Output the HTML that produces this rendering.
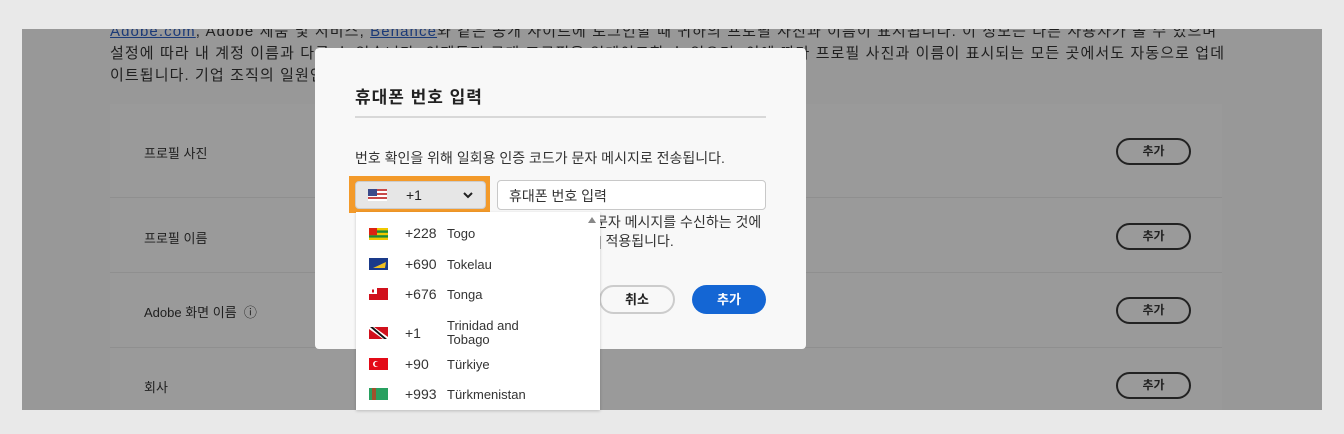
<!DOCTYPE html>
<html><head><meta charset="utf-8"><style>
*{box-sizing:border-box;margin:0;padding:0}
body{width:1344px;height:434px;background:#e9e9e9;font-family:"Liberation Sans","Noto Sans CJK KR",sans-serif;position:relative;overflow:hidden;color:#222}
.page{position:absolute;left:22px;top:29px;width:1300px;height:381px;background:#989898;overflow:hidden;z-index:1}
.txt{position:absolute;left:88px;font-size:15px;letter-spacing:1.1px;color:#1f1f1f;white-space:nowrap;line-height:22px}
.card{position:absolute;left:88px;top:75px;width:1112px;height:320px;background:#9a9a9a}
.row{position:absolute;left:0;width:1112px;border-bottom:1px solid #8f8f8f}
.row span{position:absolute;left:34px;font-size:13px;color:#1f1f1f}
.btn{position:absolute;left:1006px;width:75px;height:27px;border:2px solid #222;border-radius:14px;font-size:12px;font-weight:bold;text-align:center;line-height:23px;color:#222}
.modal{position:absolute;left:315px;top:48px;width:491px;height:301px;background:#f8f8f8;border-radius:4px;z-index:5}
.dd{position:absolute;left:356px;top:212px;width:244px;height:198px;background:#fff;box-shadow:0 1px 3px rgba(0,0,0,.2);overflow:hidden;z-index:6}
.it{position:absolute;left:0;width:244px;font-size:14px;color:#333}
.flag{position:absolute;left:13px;width:19px;height:12px}
.code{position:absolute;left:49px}
.name{position:absolute;left:91px;font-size:13px;line-height:14px}
</style></head><body>
<div class="page">
<div class="txt" style="top:-8px"><u style="color:#1b3a78">Adobe.com</u>, Adobe 제품 및 서비스, <u style="color:#1b3a78">Behance</u>와 같은 공개 사이트에 로그인할 때 귀하의 프로필 사진과 이름이 표시됩니다. 이 정보는 다른 사용자가 볼 수 있으며</div>
<div class="txt" style="top:14px">설정에 따라 내 계정 이름과 다를 수 있습니다. 언제든지 공개 프로필을 업데이트할 수 있으며, 이에 따라 프로필 사진과 이름이 표시되는 모든 곳에서도 자동으로 업데</div>
<div class="txt" style="top:36px">이트됩니다. 기업 조직의 일원인 경우 조직 내에서 이 프로필 사진과 이름이 사용될 수 있습니다.</div>
<div class="card">
<div class="row" style="top:0;height:94px"><span style="top:39px">프로필 사진</span><div class="btn" style="top:34px">추가</div></div>
<div class="row" style="top:94px;height:75px"><span style="top:30px">프로필 이름</span><div class="btn" style="top:25px">추가</div></div>
<div class="row" style="top:169px;height:75px"><span style="top:29px">Adobe 화면 이름 &nbsp;ⓘ</span><div class="btn" style="top:24px">추가</div></div>
<div class="row" style="top:244px;height:76px;border:0"><span style="top:29px">회사</span><div class="btn" style="top:24px">추가</div></div>
</div>
</div>
<div class="modal">
<div style="position:absolute;left:40px;top:35px;font-size:17px;letter-spacing:1px;font-weight:bold;color:#222">휴대폰 번호 입력</div>
<div style="position:absolute;left:40px;top:68px;width:411px;height:2px;background:#d8d8d8"></div>
<div style="position:absolute;left:40px;top:100px;font-size:14px;color:#333">번호 확인을 위해 일회용 인증 코드가 문자 메시지로 전송됩니다.</div>
<div style="position:absolute;left:34px;top:128px;width:141px;height:37px;background:#f39a2a"></div>
<div style="position:absolute;left:40px;top:133px;width:131px;height:28px;background:#e6e6e6;border:1px solid #ccc;border-radius:4px">
<svg style="position:absolute;left:12px;top:7px" width="19" height="12"><rect width="19" height="12" fill="#c84a4a"/><rect y="2" width="19" height="2" fill="#fff"/><rect y="6" width="19" height="2" fill="#fff"/><rect y="10" width="19" height="2" fill="#fff"/><rect width="9" height="7" fill="#3b4a8a"/></svg>
<span style="position:absolute;left:50px;top:5px;font-size:14px">+1</span>
<svg style="position:absolute;left:107px;top:10px" width="10" height="7"><path d="M1 1L5 5L9 1" stroke="#222" stroke-width="2" fill="none"/></svg>
</div>
<div style="position:absolute;left:182px;top:132px;width:269px;height:30px;background:#fff;border:1px solid #c8c8c8;border-radius:4px;font-size:14px;padding:5px 11px;color:#333">휴대폰 번호 입력</div>
<div style="position:absolute;left:280px;top:164px;font-size:14px;color:#333">문자 메시지를 수신하는 것에</div>
<div style="position:absolute;left:283px;top:183px;font-size:14px;color:#333">| 적용됩니다.</div>
<div style="position:absolute;left:284px;top:237px;width:76px;height:29px;border:2px solid #ccc;border-radius:15px;font-size:13px;font-weight:bold;text-align:center;line-height:25px">취소</div>
<div style="position:absolute;left:377px;top:237px;width:74px;height:29px;background:#1466d4;border-radius:15px;font-size:13px;font-weight:bold;text-align:center;line-height:29px;color:#fff">추가</div>
</div>
<div class="dd">
<div style="position:absolute;left:232px;top:5px;width:0;height:0;border-left:4px solid transparent;border-right:4px solid transparent;border-bottom:6px solid #888"></div>
<div class="it" style="top:0;height:44px"><svg class="flag" style="top:16px" viewBox="0 0 19 12"><rect width="19" height="12" fill="#f0c800"/><rect y="2.4" width="19" height="2.4" fill="#1a8a3a"/><rect y="7.2" width="19" height="2.4" fill="#1a8a3a"/><rect width="8" height="7.2" fill="#d21"/></svg><span class="code" style="top:13px">+228</span><span class="name" style="top:15px">Togo</span></div>
<div class="it" style="top:44px"><svg class="flag" style="top:2px" viewBox="0 0 19 12"><rect width="19" height="12" fill="#1a3a8a"/><path d="M4 10L17 4L16 10Z" fill="#f0c020"/></svg><span class="code" style="top:0">+690</span><span class="name" style="top:2px">Tokelau</span></div>
<div class="it" style="top:74px"><svg class="flag" style="top:2px" viewBox="0 0 19 12"><rect width="19" height="12" fill="#d1101c"/><rect width="8" height="6" fill="#fff"/><rect x="3" y="1.5" width="2" height="3" fill="#d1101c"/></svg><span class="code" style="top:0">+676</span><span class="name" style="top:2px">Tonga</span></div>
<div class="it" style="top:103px"><svg class="flag" style="top:12px" viewBox="0 0 19 12"><rect width="19" height="12" fill="#d1101c"/><path d="M0 0L5 0L19 10L19 12L14 12L0 2Z" fill="#fff"/><path d="M1 0L4 0L18 12L15 12Z" fill="#111"/></svg><span class="code" style="top:10px">+1</span><span class="name" style="top:4px">Trinidad and<br>Tobago</span></div>
<div class="it" style="top:144px"><svg class="flag" style="top:2px" viewBox="0 0 19 12"><rect width="19" height="12" fill="#e30a17"/><circle cx="7" cy="6" r="3" fill="#fff"/><circle cx="8" cy="6" r="2.4" fill="#e30a17"/></svg><span class="code" style="top:0">+90</span><span class="name" style="top:2px">Türkiye</span></div>
<div class="it" style="top:174px"><svg class="flag" style="top:2px" viewBox="0 0 19 12"><rect width="19" height="12" fill="#28a060"/><rect x="3" width="4" height="12" fill="#a0522d"/></svg><span class="code" style="top:0">+993</span><span class="name" style="top:2px">Türkmenistan</span></div>
</div>
</body></html>
